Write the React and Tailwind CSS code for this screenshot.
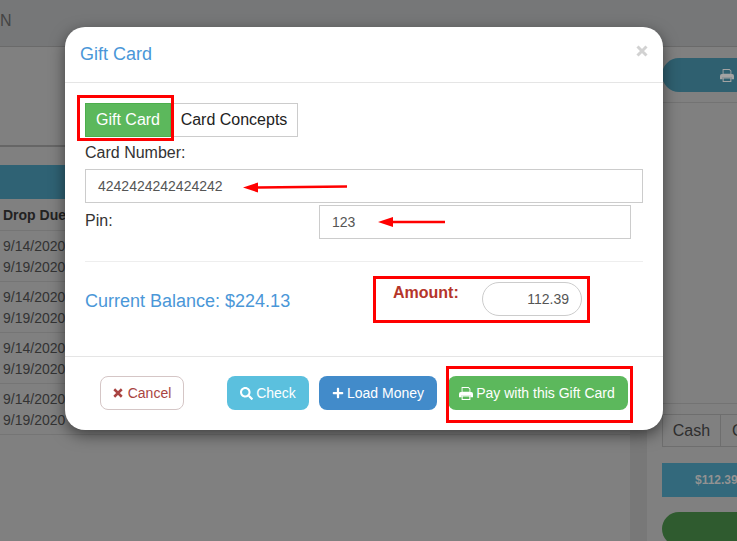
import { FaPlus, FaSearch } from "react-icons/fa";

const font = { fontFamily: '"Liberation Sans", Arial, sans-serif' };

const rows = [1, 2, 3, 4];

function PrintIcon({ className }) {
  return (
    <svg viewBox="0 0 16 14" preserveAspectRatio="none" className={className} fill="currentColor">
      <path d="M3 0h8l2 2v4H3z M4 1v4h8V2.500L10.600 1z" fillRule="evenodd" />
      <path d="M2 5.500h12a2 2 0 0 1 2 2V11h-3V9H3v2H0V7.500a2 2 0 0 1 2-2z" />
      <path d="M3 9h10v5H3z M4.200 10.200v2.600h7.600v-2.600z" fillRule="evenodd" />
    </svg>
  );
}

function TimesIcon({ className }) {
  return (
    <svg viewBox="0 0 12 12" className={className} fill="none" stroke="currentColor" strokeWidth="3">
      <path d="M1.500 1.500L10.500 10.500M10.500 1.500L1.500 10.500" />
    </svg>
  );
}

function Arrow({ className, width, tilt = 0 }) {
  return (
    <svg className={className} width={width} height="12" viewBox={`0 0 ${width} 12`}>
      <path d={`M15 ${6 + tilt}L${width} ${6 - tilt}`} stroke="#ff0000" strokeWidth="2.500" strokeLinecap="round" />
      <path d={`M0 ${6 + tilt}L15 ${1 + tilt}V${11 + tilt}Z`} fill="#ff0000" />
    </svg>
  );
}

function Background() {
  return (
    <div className="flex flex-col h-full bg-[#808080] text-[#2b2b2b]">
      <div className="h-[47px] shrink-0 bg-[#767778] border-b border-[#6a6a6a] pl-0 pt-[12px] text-[16px] leading-[18px] text-[#444]">
        N
      </div>
      <div className="flex flex-1">
        {/* left table */}
        <div className="w-[630px] shrink-0 pt-[98px]">
          <div className="h-[2px] bg-[#666]"></div>
          <div className="h-[34px] mt-[18px] bg-[#2f6274]"></div>
          <div className="h-[32px] pl-[3px] pt-[8px] border-b border-[#757575] text-[14px] leading-[16px] font-bold text-[#222]">
            Drop Due
          </div>
          {rows.map((r) => (
            <div key={r} className="h-[51px] pl-[3px] pt-[5px] border-b border-[#757575] text-[14px] leading-[21px] text-[#333]">
              <div>9/14/2020</div>
              <div>9/19/2020</div>
            </div>
          ))}
        </div>
        <div className="w-[17px] shrink-0 bg-[#787878]"></div>
        {/* right panel */}
        <div className="flex-1 pt-[11px] pl-[15px]">
          <div className="h-[34px] rounded-l-[17px] bg-[#2f6070] flex items-center pl-[58px] text-[#a3a3a3]">
            <PrintIcon className="w-[14px] h-[13px]" />
          </div>
          <div className="h-px mt-[10px] bg-[#737373] -ml-[15px]"></div>
          <div className="h-px mt-[300px] bg-[#737373] -ml-[15px]"></div>
          <div className="flex h-[33px] mt-[10px] border border-r-0 border-[#6e6e6e] text-[16px] leading-[31px] text-[#2e2e2e]">
            <div className="w-[58px] shrink-0 text-center border-r border-[#6e6e6e]">Cash</div>
            <div className="pl-[11px]">C</div>
          </div>
          <div className="h-[34px] mt-[16px] bg-[#33697c] pl-[33px] text-[12px] font-bold leading-[34px] text-[#929292]">
            $112.39
          </div>
          <div className="h-[34px] mt-[15px] rounded-l-[17px] bg-[#2f5b2f]"></div>
        </div>
      </div>
    </div>
  );
}

function GiftCardModal() {
  return (
    <div className="absolute left-[65px] top-[27px] w-[598px] h-[403px] rounded-[20px] bg-white flex flex-col shadow-[0_5px_15px_rgba(0,0,0,0.5)]">
      {/* header */}
      <div className="h-[56px] shrink-0 border-b border-[#e5e5e5] flex items-center justify-between pl-[15px] pr-[15px]">
        <h4 className="text-[18px] text-[#4a97d8]">Gift Card</h4>
        <TimesIcon className="w-[12px] h-[12px] text-[#d2d2d2] -mt-[8px]" />
      </div>

      {/* body */}
      <div className="h-[274px] shrink-0 border-b border-[#e5e5e5] pl-[20px] pr-[20px] pt-[20px]">
        <div className="flex h-[34px] text-[16px] leading-[32px]">
          <div className="w-[86px] text-center bg-[#5cb85c] border border-[#4cae4c] text-white">Gift Card</div>
          <div className="w-[127px] text-center border border-l-0 border-[#ccc] text-[#222]">Card Concepts</div>
        </div>
        <div className="mt-[7px] text-[16px] leading-[18px] text-[#333]">Card Number:</div>
        <div className="mt-[7px] h-[34px] w-[558px] border border-[#ccc] pl-[12px] text-[14px] leading-[32px] text-[#555]">
          4242424242424242
        </div>
        <div className="flex mt-[2px] w-[546px] justify-between">
          <div className="pt-[7px] text-[16px] leading-[18px] text-[#333]">Pin:</div>
          <div className="h-[34px] w-[312px] border border-[#ccc] pl-[12px] text-[14px] leading-[32px] text-[#555]">123</div>
        </div>
        <div className="h-px mt-[22px] w-[558px] bg-[#eee]"></div>
        <div className="flex mt-[20px]">
          <div className="w-[308px] pt-[9px] text-[18px] leading-[20px] text-[#4a97d8]">Current Balance: $224.13</div>
          <div className="w-[89px] pt-[2px] text-[16px] leading-[18px] font-bold text-[#b5352a]">Amount:</div>
          <div className="h-[34px] w-[100px] rounded-[17px] border border-[#ccc] pr-[12px] text-right text-[14px] leading-[32px] text-[#555]">
            112.39
          </div>
        </div>
      </div>

      {/* footer */}
      <div className="flex pl-[35px] pt-[19px] text-[14px] leading-[32px]">
        <button className="flex items-center justify-center gap-[5px] h-[34px] w-[84px] rounded-[8px] border border-[#d5c6c6] text-[#a94442]">
          <TimesIcon className="w-[10px] h-[10px]" />
          Cancel
        </button>
        <button className="flex items-center justify-center gap-[3px] h-[34px] w-[82px] ml-[43px] rounded-[8px] bg-[#5bc0de] text-white">
          <FaSearch className="w-[13px] h-[13px]" />
          Check
        </button>
        <button className="flex items-center justify-center gap-[3px] h-[34px] w-[118px] ml-[10px] rounded-[8px] bg-[#428bca] text-white">
          <FaPlus className="w-[12px] h-[12px]" />
          Load Money
        </button>
        <button className="flex items-center justify-center gap-[3px] h-[34px] w-[180px] ml-[11px] pr-[2px] rounded-[8px] bg-[#5cb85c] text-white">
          <PrintIcon className="w-[14px] h-[13px]" />
          Pay with this Gift Card
        </button>
      </div>

      {/* red annotations */}
      <div className="absolute left-[12px] top-[68px] w-[97px] h-[46px] border-[3px] border-[#ff0000]"></div>
      <Arrow className="absolute left-[178px] top-[154px]" width={104} tilt={0.5} />
      <Arrow className="absolute left-[313px] top-[189px]" width={67} />
      <div className="absolute left-[308px] top-[249px] w-[217px] h-[47px] border-[3px] border-[#ff0000]"></div>
      <div className="absolute left-[381px] top-[339px] w-[187px] h-[57px] border-[3px] border-[#ff0000]"></div>
    </div>
  );
}

export default function App() {
  return (
    <div className="relative w-[737px] h-[541px] overflow-hidden" style={font}>
      <Background />
      <GiftCardModal />
    </div>
  );
}
